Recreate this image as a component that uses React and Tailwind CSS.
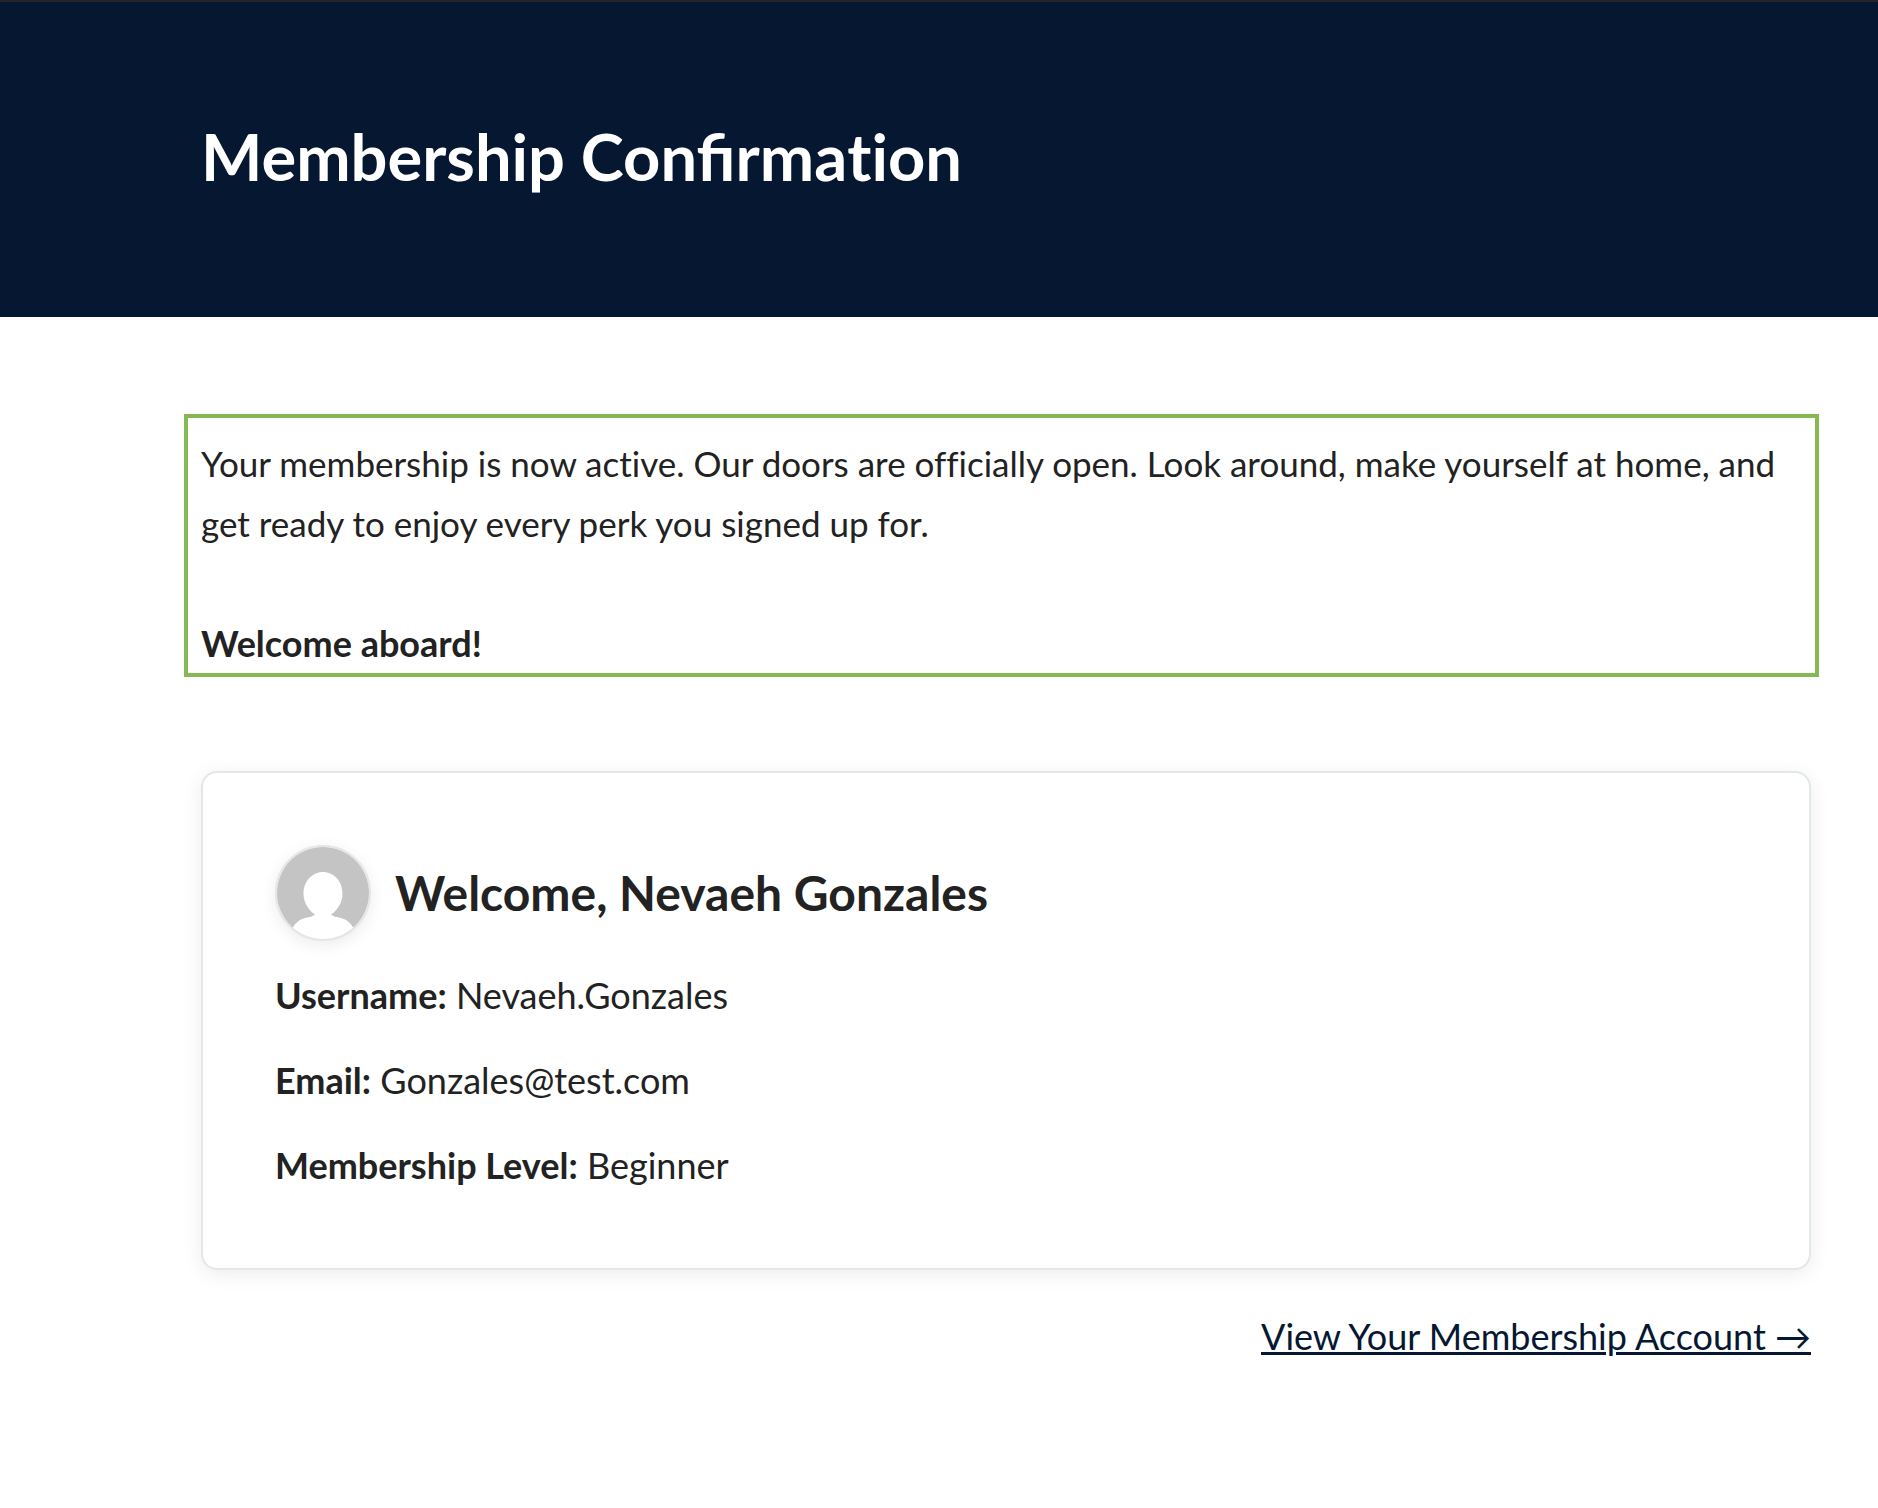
function Avatar() {
  return (
    <svg
      viewBox="0 0 92 92"
      className="size-24 shrink-0 rounded-full border-2 border-[#e6e6e6] bg-white shadow-[0_4px_16px_rgba(0,0,0,0.08)]"
      role="img"
      aria-label="Profile picture"
    >
      <rect width="92" height="92" fill="#c4c4c4" />
      <path
        d="M46 25C57 25 65.500 34.500 65.500 46.500C65.500 55 61 63 54 67.500C56 69.500 60 70 64 71C70 72.500 73.500 76 76 80.500V92H16V80.500C18.500 76 22 72.500 28 71C32 70 36 69.500 38 67.500C31 63 26.500 55 26.500 46.500C26.500 34.500 35 25 46 25Z"
        fill="#fff"
      />
    </svg>
  );
}

const details = [
  ["Username:", "Nevaeh.Gonzales"],
  ["Email:", "Gonzales@test.com"],
  ["Membership Level:", "Beginner"],
];

export default function App() {
  return (
    <div className="min-h-screen bg-white font-['Lato',sans-serif] text-[36px] leading-[61px] text-[#222222]">
      <header className="border-t-2 border-[#212529] bg-[#061831] pt-[104px] pr-[67px] pb-[111px] pl-[201px]">
        <h1 className="text-[65px] leading-[100px] font-bold text-white">
          Membership Confirma<span className="[font-variant-ligatures:none]">ti</span>on
        </h1>
      </header>
      <main className="pt-[97px] pr-[67px] pb-24 pl-[201px]">
        <section className="-mr-2 -ml-[17px] border-4 border-[#86b853] pt-[15px] pl-[13px] leading-[60px]">
          <p className="text-[35px] [font-variant-ligatures:none]">
            Your membership is now active. Our doors are officially open. Look around, make yourself at home, and get
            ready to enjoy every perk you signed up for.
          </p>
          <p className="mt-[60px] font-bold">Welcome aboard!</p>
        </section>
        <section className="mt-[94px] flex flex-col gap-6 rounded-2xl border-2 border-[#e2e8e6] p-[72px] shadow-[0_4px_20px_rgba(0,0,0,0.08)]">
          <div className="flex items-center gap-6">
            <Avatar />
            <h2 className="text-[48px] leading-[60px] font-bold">Welcome, Nevaeh Gonzales</h2>
          </div>
          {details.map(([label, value]) => (
            <p key={label}>
              <strong>{label}</strong> {value}
            </p>
          ))}
        </section>
        <nav className="mt-9 text-right text-[#061831]">
          <a href="#account" className="underline decoration-3">
            View Your Membership Account →
          </a>
        </nav>
      </main>
    </div>
  );
}
